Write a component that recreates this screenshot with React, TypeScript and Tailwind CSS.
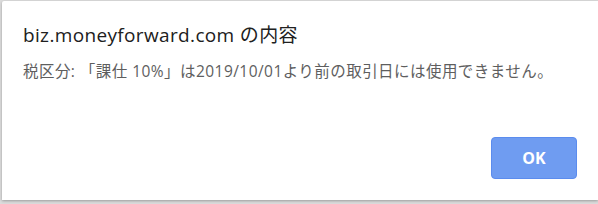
import React from "react";

export default function App() {
  return (
    <div className="w-[598px] h-[204px] bg-[#dcdcdc] pt-[1px] pl-[2px] overflow-hidden" style={{ fontFamily: '"Open Sans", "Liberation Sans", "Noto Sans CJK JP", sans-serif' }}>
      <div className="w-[596px] h-[199px] bg-white rounded-tl-[2px] shadow-[0_1px_3px_rgba(0,0,0,0.3)] flex flex-col pl-[21px] pr-[21px]">
        <div className="pt-[22px] text-[19px] leading-[25px] tracking-[0.35px] text-[#202020]">biz.moneyforward.com の内容</div>
        <div className="mt-[13px] text-[15.5px] leading-[20px] tracking-[0.45px] text-[#5e5e5e] whitespace-nowrap">税区分: 「課仕 10%」は2019/10/01より前の取引日には使用できません。</div>
        <div className="flex justify-end mt-[56px]">
          <button className="w-[86px] h-[42px] rounded-[4px] bg-[#6f9cf1] border border-[#5b8cee] text-white font-bold text-[16px]">OK</button>
        </div>
      </div>
    </div>
  );
}
